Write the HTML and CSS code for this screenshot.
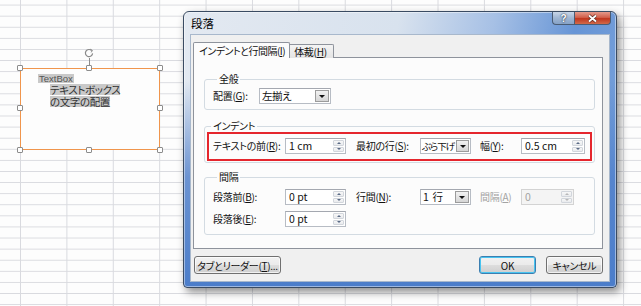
FILE: index.html
```html
<!DOCTYPE html>
<html lang="ja">

<head>
    <meta charset="UTF-8" />
    <title>段落</title>
    <link rel="stylesheet" href="styles.css">
</head>

<body>
    <div class="shape">
        <div class="rotator">
            <svg width="10" height="10" viewBox="0 0 10 10">
                <path d="M7.6 2.6 A3.6 3.6 0 1 0 8.6 5.4" fill="none" stroke="#8a8a8a" stroke-width="1.2" />
                <path d="M6.2 1.2 L8.4 2.4 L7.2 4.4" fill="none" stroke="#8a8a8a" stroke-width="1" />
            </svg>
            <span class="stem"></span>
        </div>
        <div class="shape-text">
            <p class="first-line"><span class="hl hl-small">TextBox</span></p>
            <p class="indented"><span class="hl">テキストボックス</span></p>
            <p class="indented"><span class="hl">の文字の配置</span></p>
        </div>
        <span class="handle h-tl"></span>
        <span class="handle h-tc"></span>
        <span class="handle h-tr"></span>
        <span class="handle h-ml"></span>
        <span class="handle h-mr"></span>
        <span class="handle h-bl"></span>
        <span class="handle h-bc"></span>
        <span class="handle h-br"></span>
    </div>

    <div class="dialog">
        <div class="titlebar">段落</div>
        <div class="caption-btns">
            <span class="cap-help">?</span>
            <span class="cap-close">
                <svg width="11" height="9" viewBox="0 0 11 9">
                    <path d="M2 1.5 L9 7.5 M9 1.5 L2 7.5" stroke="#5a2a22" stroke-width="3.2" />
                    <path d="M2 1.5 L9 7.5 M9 1.5 L2 7.5" stroke="#ffffff" stroke-width="1.8" />
                </svg>
            </span>
        </div>

        <div class="client">
            <div class="tabs">
                <div class="tab active">インデントと行間隔(<u>I</u>)</div>
                <div class="tab">体裁(<u>H</u>)</div>
            </div>

            <div class="panel">
                <fieldset class="group group-general">
                    <legend>全般</legend>
                    <div class="row">
                        <span class="lbl lbl-align">配置(<u>G</u>):</span>
                        <div class="combo combo-align">
                            <span class="combo-val">左揃え</span>
                            <span class="drop"></span>
                        </div>
                    </div>
                </fieldset>

                <fieldset class="group group-indent">
                    <legend>インデント</legend>
                    <div class="row marked">
                        <span class="lbl col1">テキストの前(<u>R</u>):</span>
                        <div class="spin col1-box">
                            <span class="spin-val">1 cm</span>
                            <span class="arrows"><i class="up"></i><i class="dn"></i></span>
                        </div>
                        <span class="lbl col2">最初の行(<u>S</u>):</span>
                        <div class="combo col2-box">
                            <span class="combo-val tight">ぶら下げ</span>
                            <span class="drop"></span>
                        </div>
                        <span class="lbl col3">幅(<u>Y</u>):</span>
                        <div class="spin col3-box">
                            <span class="spin-val">0.5 cm</span>
                            <span class="arrows"><i class="up"></i><i class="dn"></i></span>
                        </div>
                    </div>
                </fieldset>

                <fieldset class="group group-spacing">
                    <legend>間隔</legend>
                    <div class="row">
                        <span class="lbl col1">段落前(<u>B</u>):</span>
                        <div class="spin col1-box">
                            <span class="spin-val">0 pt</span>
                            <span class="arrows"><i class="up"></i><i class="dn"></i></span>
                        </div>
                        <span class="lbl col2">行間(<u>N</u>):</span>
                        <div class="combo col2-box">
                            <span class="combo-val">1 行</span>
                            <span class="drop"></span>
                        </div>
                        <span class="lbl col3 disabled">間隔(<u>A</u>)</span>
                        <div class="spin col3-off disabled">
                            <span class="spin-val">0</span>
                            <span class="arrows"><i class="up"></i><i class="dn"></i></span>
                        </div>
                    </div>
                    <div class="row">
                        <span class="lbl col1">段落後(<u>E</u>):</span>
                        <div class="spin col1-box">
                            <span class="spin-val">0 pt</span>
                            <span class="arrows"><i class="up"></i><i class="dn"></i></span>
                        </div>
                    </div>
                </fieldset>
            </div>

            <div class="footer">
                <button class="btn btn-tabs">タブとリーダー(<u>T</u>)...</button>
                <span class="spacer"></span>
                <button class="btn btn-ok">OK</button>
                <button class="btn">キャンセル</button>
            </div>
        </div>
    </div>
</body>

</html>
```

FILE: styles.css
```css
:root {
    --ui-font: "Noto Sans CJK JP", "Liberation Sans", sans-serif;
    --grid-line: #d9dadf;
    --frame-dark: #3a4b62;
    --client-bg: #f0f0f0;
    --panel-border: #8e939c;
    --group-border: #d3dbe2;
    --box-border: #b7bcc4;
    --text: #111;
    --dim: #a3a3a3;
}

* {
    margin: 0;
    padding: 0;
    box-sizing: border-box;
}

body {
    width: 641px;
    height: 306px;
    overflow: hidden;
    position: relative;
    font-family: var(--ui-font);
    font-feature-settings: "palt";
    font-size: 10px;
    letter-spacing: -0.3px;
    color: var(--text);
    background-color: #fdfdfd;
    background-image:
        linear-gradient(to right, var(--grid-line) 1px, transparent 1px),
        linear-gradient(to bottom, var(--grid-line) 1px, transparent 1px);
    background-size: 46.4px 100%, 100% 11.1px;
    background-position: 20px 0, 0 4.6px;
}

/* text box shape on the sheet */

.shape {
    position: absolute;
    left: 20px;
    top: 68px;
    width: 140px;
    height: 82px;
    border: 1px solid #f0954c;
    background: #fdfdfd;
}

.shape-text {
    padding: 4px 0 0 17px;
}

.hl {
    background: #c9c9c9;
    color: #333;
}

.first-line {
    height: 10px;
    line-height: 9px;
    margin-bottom: 1px;
}

.hl-small {
    display: inline-block;
    height: 9px;
    font-family: "Liberation Sans", sans-serif;
    font-size: 9.5px;
    letter-spacing: 0;
    color: #555;
    padding: 0 1px;
}

.indented {
    height: 12px;
    margin-left: 12px;
    font-size: 10.5px;
    letter-spacing: -0.4px;
    line-height: 11px;
}

.indented .hl {
    display: inline-block;
    height: 11px;
    line-height: 11px;
}

.handle {
    position: absolute;
    width: 6px;
    height: 6px;
    border: 1px solid #8c8c8c;
    border-radius: 1px;
    background: #fff;
}

.h-tl { left: -4px; top: -4px; }
.h-tc { left: 65px; top: -4px; }
.h-tr { right: -4px; top: -4px; }
.h-ml { left: -4px; top: 36px; }
.h-mr { right: -4px; top: 36px; }
.h-bl { left: -4px; bottom: -4px; }
.h-bc { left: 65px; bottom: -4px; }
.h-br { right: -4px; bottom: -4px; }

.rotator {
    position: absolute;
    left: 63px;
    top: -21px;
    width: 10px;
    display: flex;
    flex-direction: column;
    align-items: center;
}

.rotator svg {
    display: block;
}

.stem {
    width: 1px;
    height: 8px;
    background: #8c8c8c;
}

/* dialog window */

.dialog {
    position: absolute;
    left: 183px;
    top: 11px;
    width: 434px;
    height: 277px;
    display: flex;
    flex-direction: column;
    padding: 0 6px 5px 6px;
    border: 1px solid var(--frame-dark);
    border-radius: 6px 6px 4px 4px;
    background:
        linear-gradient(to bottom, rgba(78, 126, 202, 0) 0%, rgba(78, 126, 202, 0) 25%, rgba(78, 126, 202, 0.8) 60%, #4b7dca 100%),
        linear-gradient(100deg, #e3e9f1 0%, #d8e2ee 45%, #a6c0e5 65%, #6795d6 82%, #7aa2da 100%);
    box-shadow: 3px 4px 8px rgba(0, 0, 0, 0.45), inset 0 0 0 1px rgba(255, 255, 255, 0.45);
}

.titlebar {
    height: 22px;
    line-height: 22px;
    padding-left: 1px;
    font-size: 11.5px;
    letter-spacing: 0;
    color: #000;
}

.caption-btns {
    position: absolute;
    top: 0;
    right: 5px;
    display: flex;
}

.cap-help,
.cap-close {
    height: 13px;
    display: flex;
    align-items: center;
    justify-content: center;
    border: 1px solid #4a5c74;
    border-top: none;
}

.cap-help {
    width: 22px;
    border-radius: 0 0 0 4px;
    border-right: none;
    background: linear-gradient(#c8d6e8, #9fb6d3 50%, #86a2c7);
    font-family: "Liberation Sans", sans-serif;
    font-weight: bold;
    font-size: 10px;
    color: #fff;
    text-shadow: 0 0 2px #2c3a4c, 0 0 1px #2c3a4c;
}

.cap-close {
    width: 37px;
    border-radius: 0 0 4px 0;
    background: linear-gradient(#e49a8c, #d2604c 45%, #c0361f 55%, #d26a4a);
}

.client {
    flex: 1;
    background: var(--client-bg);
    border: 1px solid #a8b8cc;
    padding: 7px 0 0 2px;
}

/* tabs */

.tabs {
    display: flex;
    height: 16px;
    position: relative;
    z-index: 1;
}

.tab {
    height: 14px;
    margin-top: 2px;
    padding: 0 4px;
    line-height: 13px;
    white-space: nowrap;
    border: 1px solid var(--panel-border);
    border-bottom: none;
    background: linear-gradient(#f4f4f4, #e4e4e4);
}

.tab.active {
    height: 16px;
    margin-top: 0;
    padding: 1px 4px 0 5px;
    letter-spacing: -0.5px;
    border-radius: 2px 2px 0 0;
    background: #fcfcfc;
}

.tab + .tab {
    width: 44px;
    border-left: none;
    border-radius: 0 2px 0 0;
}

.panel {
    width: 410px;
    height: 192px;
    margin-top: -1px;
    border: 1px solid var(--panel-border);
    background: #fcfcfc;
    padding: 0 7px 0 10px;
    display: flex;
    flex-direction: column;
}

/* group boxes */

.group {
    border: 1px solid var(--group-border);
    border-radius: 3px;
    padding: 0;
    min-width: 0;
}

.group legend {
    margin-left: 4px;
    padding: 0 2px;
    line-height: 12px;
    height: 12px;
}

.group-general {
    margin-top: 15px;
    padding: 3px 8px 5px;
}

.group-indent {
    margin-top: 10px;
    padding: 0 2px 1px;
}

.group-spacing {
    margin-top: 8px;
    padding: 6px 8px 7px;
    display: flex;
    flex-direction: column;
    gap: 6px;
}

.row {
    display: flex;
    align-items: center;
    height: 16px;
}

.row.marked {
    height: 29px;
    border: 2px solid #e5262d;
    padding: 4px 4px 5px;
    align-items: flex-start;
}

.lbl {
    white-space: nowrap;
    line-height: 16px;
}

.lbl.disabled {
    color: var(--dim);
}

.lbl-align { width: 46px; }
.col1 { width: 72px; }
.col2 { width: 64px; margin-left: 10px; }
.col3 { width: 41px; margin-left: 9px; }

.combo-align { width: 72px; }
.col1-box { width: 61px; }
.col2-box { width: 51px; }
.col3-box { width: 64px; }
.col3-off { width: 53px; }

/* inputs */

.spin,
.combo {
    height: 16px;
    display: flex;
    align-items: stretch;
    background: #fff;
    border: 1px solid var(--box-border);
    border-top-color: #a4a8b0;
    letter-spacing: 0;
}

.spin-val,
.combo-val {
    flex: 1;
    padding-left: 3px;
    line-height: 14px;
    font-size: 10.5px;
    white-space: nowrap;
    overflow: hidden;
}

.combo-val {
    padding-left: 2px;
    letter-spacing: -0.4px;
    word-spacing: 2px;
}

.combo-val.tight {
    padding-left: 1px;
    font-size: 9.5px;
    letter-spacing: -1px;
}

.spin .arrows {
    width: 11px;
    margin: 1px 1px 1px 0;
    display: flex;
    flex-direction: column;
    gap: 1px;
}

.arrows i {
    flex: 1;
    display: flex;
    align-items: center;
    justify-content: center;
    border: 1px solid #d2d6dc;
    border-radius: 1px;
    background: linear-gradient(#f7f7f7, #e9ebee);
}

.arrows i::after {
    content: "";
    border-left: 2px solid transparent;
    border-right: 2px solid transparent;
}

.arrows .up::after {
    border-bottom: 2px solid #5a6b86;
}

.arrows .dn::after {
    border-top: 2px solid #5a6b86;
}

.spin.disabled {
    background: #f4f4f4;
    border-color: #d3d3d3;
    color: var(--dim);
}

.spin.disabled .arrows i::after {
    border-bottom-color: #b8b8b8;
    border-top-color: #b8b8b8;
}

.drop {
    width: 14px;
    flex-shrink: 0;
    margin: 1px;
    display: flex;
    align-items: center;
    justify-content: center;
    border: 1px solid #9c9c9c;
    background: linear-gradient(#f2f2f2, #d6d6d6);
}

.tight + .drop {
    width: 13px;
    margin-left: 0;
}

.drop::after {
    content: "";
    border-left: 3px solid transparent;
    border-right: 3px solid transparent;
    border-top: 3px solid #111;
}

/* footer buttons */

.footer {
    width: 410px;
    margin-top: 7px;
    display: flex;
    gap: 10px;
}

.spacer {
    flex: 1;
}

.btn {
    height: 18px;
    width: 57px;
    padding: 0;
    white-space: nowrap;
    font-family: var(--ui-font);
    font-feature-settings: "palt";
    font-size: 10px;
    letter-spacing: -0.3px;
    color: var(--text);
    border: 1px solid #707070;
    border-radius: 3px;
    background: linear-gradient(#f2f2f2 0%, #ebebeb 48%, #dddddd 52%, #cfcfcf 100%);
    box-shadow: inset 0 0 0 1px rgba(255, 255, 255, 0.7);
}

.btn-tabs {
    width: 87px;
    margin-left: 1px;
}

.btn-ok {
    border-color: #3c7fb1;
    box-shadow: inset 0 0 0 1px #48c4f0;
}
```
